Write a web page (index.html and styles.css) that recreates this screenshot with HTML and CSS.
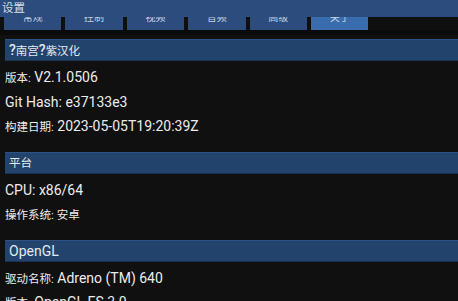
FILE: index.html
```html
<!DOCTYPE html>
<html>
<head>
<meta charset="utf-8">
<link rel="stylesheet" href="styles.css">
</head>
<body>
<div class="app">
  <div class="titlebar">设置</div>
  <div class="tabs">
    <div class="tab"><span>常规</span></div>
    <div class="tab"><span>控制</span></div>
    <div class="tab"><span>视频</span></div>
    <div class="tab"><span>音频</span></div>
    <div class="tab"><span>高级</span></div>
    <div class="tab active"><span>关于</span></div>
  </div>
  <div class="tabshadow"></div>
  <div class="content">
    <section class="section">
      <div class="header"><span class="q">?</span>南宫<span class="q">?</span>紫汉化</div>
      <div class="row"><span class="cjk">版本:</span> V2.1.0506</div>
      <div class="row">Git Hash: e37133e3</div>
      <div class="row"><span class="cjk">构建日期:</span> 2023-05-05T19:20:39Z</div>
    </section>
    <section class="section">
      <div class="header">平台</div>
      <div class="row">CPU: x86/64</div>
      <div class="row"><span class="cjk">操作系统: 安卓</span></div>
    </section>
    <section class="section">
      <div class="header latin">OpenGL</div>
      <div class="row"><span class="cjk">驱动名称:</span> Adreno (TM) 640</div>
      <div class="row"><span class="cjk">版本:</span> OpenGL ES 3.0</div>
    </section>
  </div>
</div>
</body>
</html>
```
FILE: styles.css
```css
html, body {
  margin: 0;
  padding: 0;
  background: #101010;
  overflow: hidden;
}
.app {
  width: 458px;
  height: 301px;
  overflow: hidden;
  font-family: Roboto, "Noto Sans CJK SC", sans-serif;
  color: #ececec;
  background: #101010;
}
.titlebar {
  height: 17px;
  background: #2b4c7c;
  color: #d8dde6;
  font-size: 11.5px;
  line-height: 17px;
  padding-left: 2px;
}
.tabs {
  display: flex;
  height: 13px;
  padding-left: 4px;
  gap: 4px;
  background: #0f0f0f;
}
.tab {
  width: 57.4px;
  height: 13px;
  background: #2b4c7c;
  overflow: hidden;
  display: flex;
  justify-content: center;
  align-items: flex-start;
  font-size: 10px;
  color: #c9d3e2;
}
.tab span {
  display: block;
  line-height: 13px;
  margin-top: -6px;
}
.tab.active {
  background: #3a6dae;
}
.tabshadow {
  height: 5px;
  background: #0b0b0b;
}
.content {
  padding: 4px 0 0 5px;
}
.section {
  margin-bottom: 13px;
}
.header {
  height: 20px;
  background: #22446c;
  border-top: 1px solid #2d5384;
  border-bottom: 1px solid #1a3352;
  padding-left: 4px;
  font-size: 11.5px;
  line-height: 20px;
  color: #e6e9ee;
  margin-bottom: 4px;
}
.header .q {
  font-size: 14px;
  font-weight: 500;
}
.header.latin {
  font-size: 14px;
}
.row {
  height: 24.5px;
  line-height: 24.5px;
  font-size: 14px;
  white-space: nowrap;
}
.cjk {
  font-size: 11.5px;
}
```
